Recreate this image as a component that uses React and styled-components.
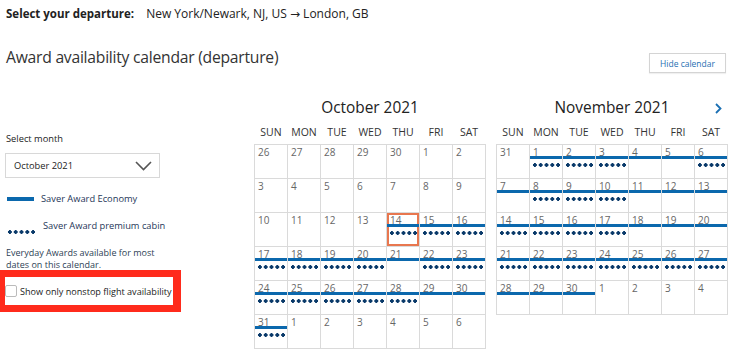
import React from "react";
import styled, { createGlobalStyle } from "styled-components";

const GlobalStyle = createGlobalStyle`
  body {
    margin: 0;
    background: #fff;
    font-family: "Open Sans", "DejaVu Sans", sans-serif;
    color: #222;
  }
`;

const october = [
  [[26], [27], [28], [29], [30], [1], [2]],
  [[3], [4], [5], [6], [7], [8], [9]],
  [[10], [11], [12], [13], [14, 1, 1, 1], [15, 1, 1], [16, 1, 1]],
  [[17, 1, 1], [18, 1, 1], [19, 1, 1], [20, 1, 1], [21, 1, 0], [22, 1, 1], [23, 1, 1]],
  [[24, 1, 1], [25, 1, 1], [26, 1, 1], [27, 1, 1], [28, 1, 1], [29, 1, 0], [30, 1, 0]],
  [[31, 1, 1], [1], [2], [3], [4], [5], [6]],
];

const november = [
  [[31], [1, 1, 1], [2, 1, 1], [3, 1, 1], [4, 1, 0], [5, 1, 0], [6, 1, 1]],
  [[7, 1, 0], [8, 1, 1], [9, 1, 1], [10, 1, 1], [11, 1, 0], [12, 1, 0], [13, 1, 0]],
  [[14, 1, 1], [15, 1, 1], [16, 1, 1], [17, 1, 1], [18, 1, 0], [19, 1, 0], [20, 1, 0]],
  [[21, 1, 1], [22, 1, 1], [23, 1, 1], [24, 1, 1], [25, 1, 1], [26, 1, 1], [27, 1, 1]],
  [[28, 1, 0], [29, 1, 0], [30, 1, 0], [1], [2], [3], [4]],
];

const days = ["SUN", "MON", "TUE", "WED", "THU", "FRI", "SAT"];

function Month({ title, weeks, next }) {
  return (
    <MonthBox>
      <MonthTitle>
        {title}
        {next && (
          <NextArrow width="7" height="11" viewBox="0 0 7 11">
            <polyline points="1,1 5.5,5.5 1,10" fill="none" stroke="#1a6fb3" strokeWidth="1.8" />
          </NextArrow>
        )}
      </MonthTitle>
      <DayNames>
        {days.map((d) => (
          <span key={d}>{d}</span>
        ))}
      </DayNames>
      <Grid>
        {weeks.flat().map(([n, bar, dots, selected], i) => (
          <Cell key={i} $selected={selected}>
            {n}
            {bar && <Bar />}
            {dots ? <Dots /> : null}
          </Cell>
        ))}
      </Grid>
    </MonthBox>
  );
}

export default function App() {
  return (
    <Page>
      <GlobalStyle />
      <Header>
        <b>Select your departure:</b>
        <span>New York/Newark, NJ, US → London, GB</span>
      </Header>
      <TitleRow>
        <Title>Award availability calendar (departure)</Title>
        <HideButton>Hide calendar</HideButton>
      </TitleRow>
      <Main>
        <Side>
          <Label>Select month</Label>
          <Dropdown>
            October 2021
            <svg width="17" height="10" viewBox="0 0 17 10">
              <polyline points="1,1 8.5,8.5 16,1" fill="none" stroke="#555" strokeWidth="1.6" />
            </svg>
          </Dropdown>
          <LegendRow>
            <LegendBar />
            <LegendText>Saver Award Economy</LegendText>
          </LegendRow>
          <LegendRow $dots>
            <LegendDots />
            <LegendText>Saver Award premium cabin</LegendText>
          </LegendRow>
          <Note>
            <div>Everyday Awards available for most</div>
            <div>dates on this calendar.</div>
          </Note>
          <Highlight>
            <CheckRow>
              <Check type="checkbox" />
              Show only nonstop flight availability
            </CheckRow>
          </Highlight>
        </Side>
        <Calendars>
          <Month title="October 2021" weeks={october} />
          <Month title="November 2021" weeks={november} next />
        </Calendars>
      </Main>
    </Page>
  );
}

const Page = styled.div`
  width: 732px;
  height: 355px;
  overflow: hidden;
`;

const Header = styled.div`
  display: flex;
  align-items: baseline;
  gap: 12px;
  padding: 6px 6px 0;
  font-size: 12px;
  line-height: 16px;
  color: #222;

  b {
    font-size: 11.5px;
  }
`;

const TitleRow = styled.div`
  display: flex;
  justify-content: space-between;
  align-items: flex-start;
  margin-top: 23px;
  padding: 0 6px;
`;

const Title = styled.h1`
  margin: 0;
  font-size: 15.7px;
  line-height: 24px;
  letter-spacing: -0.25px;
  font-weight: 400;
  color: #333;
`;

const HideButton = styled.button`
  margin-top: 8px;
  width: 77px;
  height: 20px;
  padding: 0;
  background: #fff;
  border: 1px solid #d4d4d4;
  box-shadow: 0 1px 1px rgba(0, 0, 0, 0.06);
  font-family: inherit;
  font-size: 8.5px;
  color: #1f6fb2;
`;

const Main = styled.div`
  display: flex;
`;

const Side = styled.div`
  width: 249px;
  padding: 59px 0 0 5px;
  display: flex;
  flex-direction: column;
  align-items: flex-start;
`;

const Label = styled.div`
  margin-left: 1px;
  font-size: 9.3px;
  line-height: 14px;
  color: #222;
`;

const Dropdown = styled.div`
  margin-top: 7px;
  box-sizing: border-box;
  width: 155px;
  height: 25px;
  padding: 0 7px 0 8px;
  border: 1px solid #d8d8d8;
  display: flex;
  align-items: center;
  justify-content: space-between;
  font-size: 9.3px;
  color: #222;
`;

const LegendRow = styled.div`
  margin-top: ${(p) => (p.$dots ? "13px" : "14px")};
  margin-left: 2px;
  display: flex;
  align-items: ${(p) => (p.$dots ? "flex-start" : "center")};
  gap: 7px;
`;

const LegendBar = styled.div`
  width: 27px;
  height: 4px;
  background: #0b68ad;
`;

const LegendDots = styled.div`
  margin-top: 11px;
  width: 29px;
  height: 4px;
  background: radial-gradient(circle, #0a3a6a 1.6px, transparent 2px) 0 0 / 5.8px 4px repeat-x;
`;

const LegendText = styled.span`
  font-size: 9.3px;
  line-height: 14px;
  color: #1e3658;
`;

const Note = styled.div`
  margin-top: 13px;
  margin-left: 1px;
  display: flex;
  flex-direction: column;
  font-size: 9px;
  line-height: 11.5px;
  color: #2e3f55;
`;

const Highlight = styled.div`
  margin-left: -5px;
  box-sizing: border-box;
  width: 181px;
  border: 7px solid #ff2b1c;
  border-left-width: 5px;
  border-right-width: 8px;
  background: #fff;
`;

const CheckRow = styled.label`
  display: flex;
  align-items: center;
  gap: 3px;
  height: 28px;
  white-space: nowrap;
  font-size: 9.1px;
  color: #222;
`;

const Check = styled.input`
  margin: 0;
  width: 12px;
  height: 12px;
  appearance: none;
  border: 1px solid #bbb;
  border-radius: 2px;
  background: #fff;
`;

const Calendars = styled.div`
  display: flex;
  gap: 10px;
  padding-top: 24px;
`;

const MonthBox = styled.div`
  width: 232px;
`;

const MonthTitle = styled.div`
  position: relative;
  text-align: center;
  font-size: 15.4px;
  line-height: 22px;
  color: #222;
`;

const NextArrow = styled.svg`
  position: absolute;
  right: 6px;
  top: 6px;
`;

const DayNames = styled.div`
  margin-top: 6px;
  padding: 0 1px;
  display: grid;
  grid-template-columns: repeat(7, 32px);
  column-gap: 1px;
  font-size: 10.5px;
  line-height: 14px;
  color: #333;
  text-align: center;
`;

const Grid = styled.div`
  margin-top: 5px;
  display: grid;
  grid-template-columns: repeat(7, 32px);
  grid-auto-rows: 33px;
  gap: 1px;
  background: #dadada;
  border: 1px solid #dadada;
`;

const Cell = styled.div`
  position: relative;
  background: #fff;
  padding: 1px 0 0 3px;
  font-size: 10px;
  line-height: 12px;
  color: #666;
  box-shadow: ${(p) => (p.$selected ? "inset 0 0 0 2px #e8774f" : "none")};
`;

const Bar = styled.div`
  position: absolute;
  left: 0;
  right: 0;
  top: 11px;
  height: 3px;
  background: #0b68ad;
`;

const Dots = styled.div`
  position: absolute;
  left: 2px;
  top: 18px;
  width: 29px;
  height: 4px;
  background: radial-gradient(circle, #0a3a6a 1.6px, transparent 2px) 0 0 / 5.8px 4px repeat-x;
`;
